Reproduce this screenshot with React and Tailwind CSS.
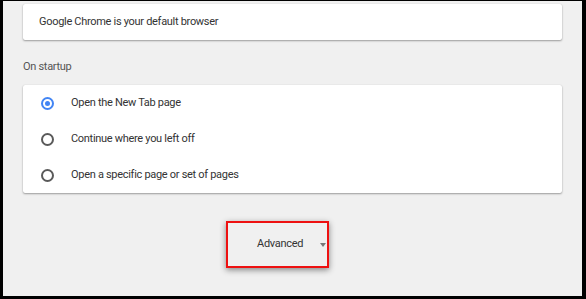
export default function App() {
  const rows = [
    { label: "Open the New Tab page", checked: true },
    { label: "Continue where you left off", checked: false },
    { label: "Open a specific page or set of pages", checked: false },
  ];
  return (
    <div className="w-[586px] h-[299px] bg-black pt-[1px] pl-[3px] pr-[4px] pb-[3px] font-['Roboto',sans-serif]">
      <div className="w-full h-full bg-[#f0f0f0] flex flex-col px-[20px]">
        <div className="mt-[3px] h-[36px] bg-white rounded-[2px] shadow-[0_1px_2px_rgba(0,0,0,0.35),0_0_1px_rgba(0,0,0,0.15)] flex items-center pl-[16px] text-[11px] tracking-[-0.3px] text-[#333]">
          Google Chrome is your default browser
        </div>
        <div className="mt-[19px] h-[16px] leading-[16px] text-[11px] tracking-[-0.3px] text-[#555]">On startup</div>
        <div className="mt-[10px] bg-white rounded-[2px] shadow-[0_1px_2px_rgba(0,0,0,0.35),0_0_1px_rgba(0,0,0,0.15)] flex flex-col">
          {rows.map((r) => (
            <div key={r.label} className="h-[36px] flex items-center pl-[18px] text-[11px] tracking-[-0.3px] text-[#333]">
              {r.checked ? (
                <span className="w-[13px] h-[13px] rounded-full border-2 border-[#4285f4] flex items-center justify-center">
                  <span className="w-[5px] h-[5px] rounded-full bg-[#4285f4]" />
                </span>
              ) : (
                <span className="w-[13px] h-[13px] rounded-full border-2 border-[#5a5a5a]" />
              )}
              <span className="ml-[17px]">{r.label}</span>
            </div>
          ))}
        </div>
        <div className="mt-[28px] ml-[203px] w-[103px] h-[47px] border-2 border-[#ee1111] shadow-[0_2px_6px_rgba(0,0,0,0.45)] bg-[#f0f0f0] flex items-center text-[11px] tracking-[-0.3px] text-[#333]">
          <span className="ml-[29px]">Advanced</span>
          <span className="ml-[17px] w-0 h-0 border-l-[3px] border-r-[3px] border-t-[4px] border-l-transparent border-r-transparent border-t-[#777]" />
        </div>
      </div>
    </div>
  );
}
